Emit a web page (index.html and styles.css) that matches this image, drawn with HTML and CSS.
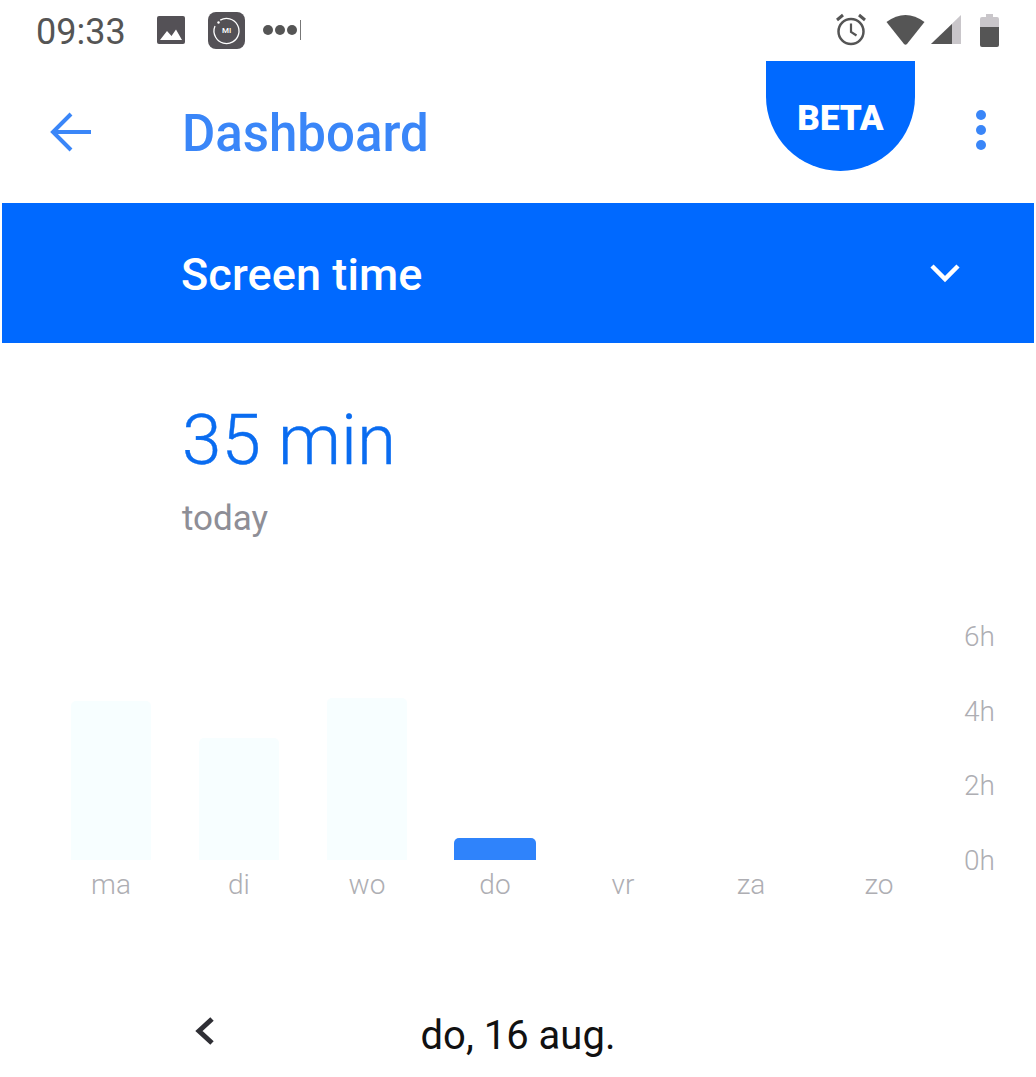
FILE: index.html
```html
<!DOCTYPE html>
<html lang="en">
<head>
    <meta charset="UTF-8">
    <title>Dashboard</title>
    <link rel="stylesheet" href="styles.css">
</head>
<body>

<div class="status_bar">
  <div class="status_left">
    <span class="clock">09:33</span>
    <svg class="ic_image" width="30" height="30" viewBox="0 0 30 30">
      <rect x="1" y="1" width="28" height="28" rx="2" fill="#545156"/>
      <path d="M4 25 L11 16 L15.500 21 L20 14.500 L26 25 Z" fill="#fff"/>
    </svg>
    <div class="mi_icon">
      <svg width="37" height="37" viewBox="0 0 37 37">
        <circle cx="18.500" cy="19" r="12.500" fill="none" stroke="#fff" stroke-width="1.300" stroke-dasharray="70 8.500" transform="rotate(-120 18.500 19)"/>
        <circle cx="10.500" cy="10.500" r="1.200" fill="#fff"/>
      </svg>
      <span class="mi_text">MI</span>
    </div>
    <div class="dots">
      <i></i><i></i><i></i><b></b>
    </div>
  </div>
  <div class="status_right">
    <svg width="32" height="34" viewBox="0 0 32 34">
      <circle cx="16" cy="18.500" r="12.500" fill="none" stroke="#555" stroke-width="2.500"/>
      <path d="M16 10.500 V19 L21.500 22.500" fill="none" stroke="#555" stroke-width="2.200"/>
      <path d="M2 7 L8 2 M30 7 L24 2" stroke="#555" stroke-width="3"/>
    </svg>
    <svg class="ic_wifi" width="39" height="32" viewBox="0 0 39 32">
      <path d="M0.500 8 Q19.500 -6 38.500 8 L21 30 Q19.500 31.500 18 30 Z" fill="#555"/>
    </svg>
    <svg class="ic_signal" width="30" height="30" viewBox="0 0 30 30">
      <path d="M0 29 L30 0 V29 Z" fill="#c9c6ca"/>
      <path d="M0 29 L21 9 V29 Z" fill="#555"/>
    </svg>
    <svg class="ic_battery" width="19" height="33" viewBox="0 0 19 33">
      <path d="M6 0 H13 V3 H17 Q19 3 19 5 V13 H0 V5 Q0 3 2 3 H6 Z" fill="#c9c6ca"/>
      <path d="M0 13 H19 V31 Q19 33 17 33 H2 Q0 33 0 31 Z" fill="#555"/>
    </svg>
  </div>
</div>

<div class="toolbar">
  <svg class="back_arrow" width="42" height="40" viewBox="0 0 42 40">
    <path d="M21 2 L3 20 L21 38 M3 20 H41" fill="none" stroke="#3a86f8" stroke-width="4"/>
  </svg>
  <h1 class="page_title">Dashboard</h1>
  <div class="beta_badge">BETA</div>
  <div class="kebab"><i></i><i></i><i></i></div>
</div>

<div class="select_band">
  <span class="select_label">Screen time</span>
  <svg width="32" height="20" viewBox="0 0 32 20">
    <path d="M3 3 L16 16 L29 3" fill="none" stroke="#fff" stroke-width="4.500"/>
  </svg>
</div>

<section class="summary">
  <div class="summary_value">35 min</div>
  <div class="summary_label">today</div>
</section>

<section class="chart">
  <div class="days">
    <div class="day"><div class="bar_area"><div class="bar" style="height: 159px"></div></div><span>ma</span></div>
    <div class="day"><div class="bar_area"><div class="bar" style="height: 122px"></div></div><span>di</span></div>
    <div class="day"><div class="bar_area"><div class="bar" style="height: 162px"></div></div><span>wo</span></div>
    <div class="day"><div class="bar_area"><div class="bar active" style="height: 22px"></div></div><span>do</span></div>
    <div class="day"><div class="bar_area"></div><span>vr</span></div>
    <div class="day"><div class="bar_area"></div><span>za</span></div>
    <div class="day"><div class="bar_area"></div><span>zo</span></div>
  </div>
  <div class="axis">
    <span>6h</span>
    <span>4h</span>
    <span>2h</span>
    <span>0h</span>
  </div>
</section>

<div class="date_nav">
  <svg class="date_prev" width="22" height="30" viewBox="0 0 22 30">
    <path d="M19 3 L6 15 L19 27" fill="none" stroke="#2f2f35" stroke-width="5"/>
  </svg>
  <span class="date_text">do, 16 aug.</span>
</div>

</body>
</html>
```

FILE: styles.css
```css
body{
  margin: 0;
  background-color: #fff;
  font-family: 'Roboto', sans-serif;
  height: 1077px;
  overflow: hidden;
}

.status_bar{
  height: 60px;
  display: flex;
  justify-content: space-between;
  align-items: center;
  padding: 0 37px 0 36px;
}
.status_left,
.status_right{
  display: flex;
  align-items: center;
}
.clock{
  padding-top: 3px;
  font-size: 36px;
  color: #555;
  width: 120px;
}
.mi_icon{
  position: relative;
  width: 37px;
  height: 37px;
  margin-left: 22px;
  background-color: #545156;
  border-radius: 8px;
}
.mi_text{
  position: absolute;
  top: 14px;
  left: 14px;
  font-size: 8px;
  line-height: 10px;
  font-weight: 500;
  color: #fff;
}
.dots{
  display: flex;
  align-items: center;
  gap: 2px;
  margin-left: 18px;
}
.dots i{
  width: 10px;
  height: 10px;
  border-radius: 50%;
  background-color: #555;
}
.dots b{
  width: 1px;
  height: 20px;
  margin-left: 1px;
  background-color: #777;
}
.ic_wifi{
  margin-left: 19px;
}
.ic_signal{
  margin-left: 6px;
}
.ic_battery{
  margin-left: 19px;
}

.toolbar{
  position: relative;
  height: 143px;
  display: flex;
  align-items: center;
  padding-left: 50px;
}
.page_title{
  margin: 3px 0 0 90px;
  font-size: 51px;
  font-weight: 500;
  color: #3a86f8;
}
.beta_badge{
  position: absolute;
  top: 1px;
  left: 766px;
  width: 149px;
  height: 110px;
  box-sizing: border-box;
  padding-top: 37px;
  border-radius: 0 0 75px 75px;
  background-color: #0069ff;
  color: #fff;
  font-size: 35px;
  font-weight: 900;
  text-align: center;
}
.kebab{
  position: absolute;
  top: 50px;
  left: 976px;
  display: flex;
  flex-direction: column;
  gap: 5px;
}
.kebab i{
  width: 10px;
  height: 10px;
  border-radius: 50%;
  background-color: #3a86f8;
}

.select_band{
  height: 140px;
  margin: 0 2px;
  display: flex;
  justify-content: space-between;
  align-items: center;
  padding: 0 73px 0 179px;
  background-color: #0069ff;
}
.select_label{
  padding-top: 3px;
  font-size: 45px;
  font-weight: 500;
  letter-spacing: 0.1px;
  color: #fff;
}

.summary{
  padding: 59px 0 0 182px;
  height: 217px;
  box-sizing: border-box;
}
.summary_value{
  font-size: 71px;
  line-height: 76px;
  font-weight: 300;
  -webkit-text-stroke: 0.4px #0a6cf0;
  color: #0a6cf0;
}
.summary_label{
  margin-top: 21px;
  font-size: 35px;
  line-height: 40px;
  font-weight: 400;
  color: #8e8e96;
}

.chart{
  height: 392px;
  display: flex;
  align-items: flex-start;
  padding: 58px 0 0 47px;
}
.days{
  display: flex;
  width: 896px;
}
.day{
  flex: 1;
  display: flex;
  flex-direction: column;
  align-items: center;
  font-size: 28px;
  font-weight: 300;
  line-height: 36px;
  color: #aeaeb3;
}
.bar_area{
  height: 242px;
  width: 100%;
  display: flex;
  justify-content: center;
  align-items: flex-end;
  margin-bottom: 7px;
}
.bar{
  width: 80px;
  border-radius: 5px 5px 0 0;
  background-color: #f7feff;
}
.bar.active{
  width: 82px;
  background-color: #2f83fb;
}
.axis{
  height: 260px;
  width: 52px;
  margin-top: 1px;
  display: flex;
  flex-direction: column;
  justify-content: space-between;
  align-items: flex-end;
  font-size: 28px;
  font-weight: 300;
  line-height: 36px;
  color: #aeaeb3;
}

.date_nav{
  position: relative;
  display: flex;
  justify-content: center;
  align-items: center;
  height: 50px;
}
.date_prev{
  position: absolute;
  left: 193px;
  top: 6px;
}
.date_text{
  font-size: 40px;
  color: #111;
}
```
